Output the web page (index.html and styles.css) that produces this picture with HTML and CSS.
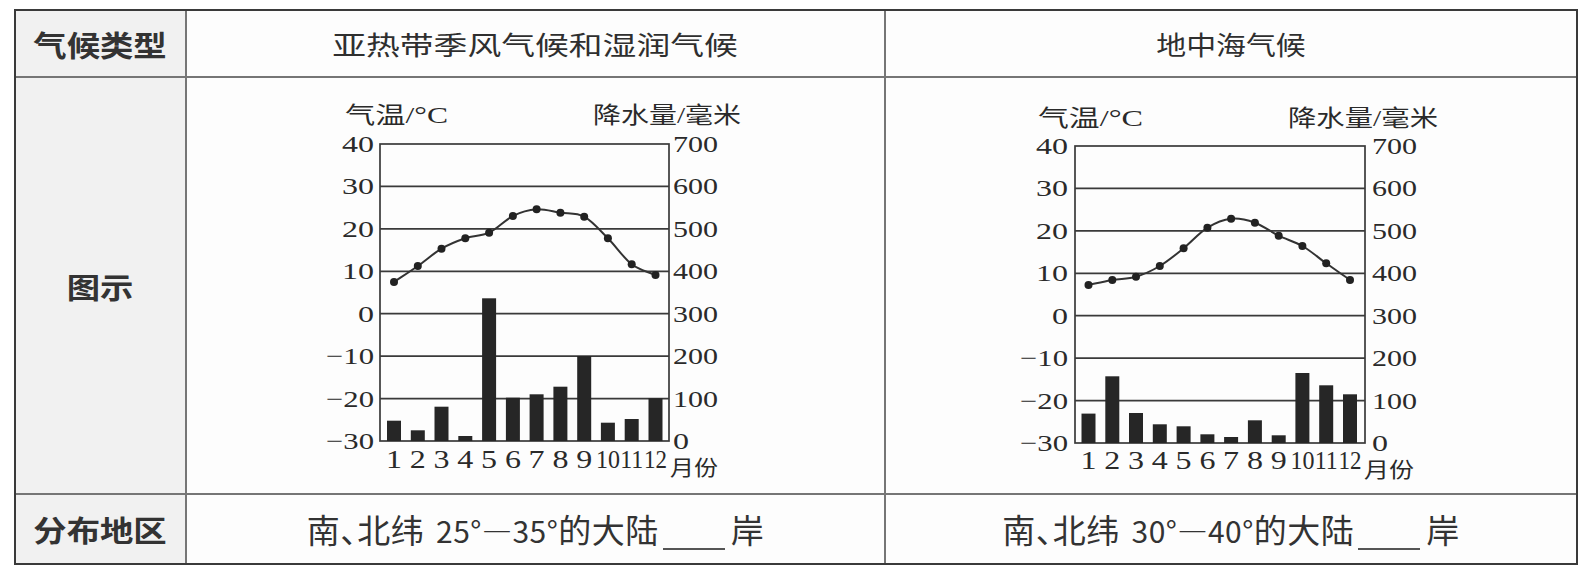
FILE: index.html
```html
<!DOCTYPE html>
<html lang="zh-CN">
<head>
<meta charset="utf-8">
<title>气候类型</title>
<link rel="stylesheet" href="styles.css">
</head>
<body>
<div class="sheet">
  <div class="grid">
    <div class="cell head"><span class="label">气候类型</span></div>
    <div class="cell"><span class="title">亚热带季风气候和湿润气候</span></div>
    <div class="cell"><span class="title narrow">地中海气候</span></div>

    <div class="cell head"><span class="label">图示</span></div>
    <div class="cell chart">
      <svg class="plot" viewBox="0 0 697 415" width="697" height="415">
        <g class="axes">
          <rect x="193" y="66" width="289" height="297"/>
          <line x1="193" y1="108.4" x2="482" y2="108.4"/>
          <line x1="193" y1="150.9" x2="482" y2="150.9"/>
          <line x1="193" y1="193.3" x2="482" y2="193.3"/>
          <line x1="193" y1="235.7" x2="482" y2="235.7"/>
          <line x1="193" y1="278.1" x2="482" y2="278.1"/>
          <line x1="193" y1="320.6" x2="482" y2="320.6"/>
        </g>
        <g class="bars">
          <rect x="200" y="342.7" width="14" height="20.3"/>
          <rect x="223.8" y="352.3" width="14" height="10.7"/>
          <rect x="247.5" y="328.7" width="14" height="34.3"/>
          <rect x="271.3" y="358" width="14" height="5"/>
          <rect x="295.1" y="220.3" width="14" height="142.7"/>
          <rect x="318.9" y="319.7" width="14" height="43.3"/>
          <rect x="342.6" y="316.3" width="14" height="46.7"/>
          <rect x="366.4" y="308.7" width="14" height="54.3"/>
          <rect x="390.2" y="278" width="14" height="85"/>
          <rect x="413.9" y="344.7" width="14" height="18.3"/>
          <rect x="437.7" y="341" width="14" height="22"/>
          <rect x="461.5" y="320.3" width="14" height="42.7"/>
        </g>
        <path class="curve" d="M207,204 C214.9,198.7 222.9,193.6 230.8,188 C238.7,182.5 246.6,175.3 254.5,170.7 C262.4,166.1 270.4,163 278.3,160.3 C286.2,157.6 294.2,158.4 302.1,154.7 C310,151 318,141.9 325.9,138 C333.8,134.1 341.7,131.9 349.6,131.3 C357.5,130.8 365.5,133.5 373.4,134.7 C381.3,135.9 389.3,134.4 397.2,138.7 C405.1,143 413,152.4 420.9,160.3 C428.8,168.2 436.8,180.2 444.7,186.3 C452.6,192.4 460.6,193.4 468.5,197"/>
        <g class="dots">
          <circle cx="207" cy="204" r="4"/>
          <circle cx="230.8" cy="188" r="4"/>
          <circle cx="254.5" cy="170.7" r="4"/>
          <circle cx="278.3" cy="160.3" r="4"/>
          <circle cx="302.1" cy="154.7" r="4"/>
          <circle cx="325.9" cy="138" r="4"/>
          <circle cx="349.6" cy="131.3" r="4"/>
          <circle cx="373.4" cy="134.7" r="4"/>
          <circle cx="397.2" cy="138.7" r="4"/>
          <circle cx="420.9" cy="160.3" r="4"/>
          <circle cx="444.7" cy="186.3" r="4"/>
          <circle cx="468.5" cy="197" r="4"/>
        </g>
        <text x="158" y="45" textLength="103" lengthAdjust="spacingAndGlyphs"><tspan class="cjk">气温</tspan>/°C</text>
        <text x="406" y="45" textLength="148" lengthAdjust="spacingAndGlyphs"><tspan class="cjk">降水量</tspan>/<tspan class="cjk">毫米</tspan></text>
        <g class="end">
          <text x="187" y="74" textLength="32" lengthAdjust="spacingAndGlyphs">40</text>
          <text x="187" y="116.4" textLength="32" lengthAdjust="spacingAndGlyphs">30</text>
          <text x="187" y="158.9" textLength="32" lengthAdjust="spacingAndGlyphs">20</text>
          <text x="187" y="201.3" textLength="32" lengthAdjust="spacingAndGlyphs">10</text>
          <text x="187" y="243.7" textLength="16" lengthAdjust="spacingAndGlyphs">0</text>
          <text x="187" y="286.1" textLength="48" lengthAdjust="spacingAndGlyphs">−10</text>
          <text x="187" y="328.6" textLength="48" lengthAdjust="spacingAndGlyphs">−20</text>
          <text x="187" y="371" textLength="48" lengthAdjust="spacingAndGlyphs">−30</text>
        </g>
        <g>
          <text x="486" y="74" textLength="45" lengthAdjust="spacingAndGlyphs">700</text>
          <text x="486" y="116.4" textLength="45" lengthAdjust="spacingAndGlyphs">600</text>
          <text x="486" y="158.9" textLength="45" lengthAdjust="spacingAndGlyphs">500</text>
          <text x="486" y="201.3" textLength="45" lengthAdjust="spacingAndGlyphs">400</text>
          <text x="486" y="243.7" textLength="45" lengthAdjust="spacingAndGlyphs">300</text>
          <text x="486" y="286.1" textLength="45" lengthAdjust="spacingAndGlyphs">200</text>
          <text x="486" y="328.6" textLength="45" lengthAdjust="spacingAndGlyphs">100</text>
          <text x="486" y="371" textLength="16" lengthAdjust="spacingAndGlyphs">0</text>
        </g>
        <g class="mid">
          <text x="207" y="390" textLength="16" lengthAdjust="spacingAndGlyphs">1</text>
          <text x="230.8" y="390" textLength="16" lengthAdjust="spacingAndGlyphs">2</text>
          <text x="254.5" y="390" textLength="16" lengthAdjust="spacingAndGlyphs">3</text>
          <text x="278.3" y="390" textLength="16" lengthAdjust="spacingAndGlyphs">4</text>
          <text x="302.1" y="390" textLength="16" lengthAdjust="spacingAndGlyphs">5</text>
          <text x="325.9" y="390" textLength="16" lengthAdjust="spacingAndGlyphs">6</text>
          <text x="349.6" y="390" textLength="16" lengthAdjust="spacingAndGlyphs">7</text>
          <text x="373.4" y="390" textLength="16" lengthAdjust="spacingAndGlyphs">8</text>
          <text x="397.2" y="390" textLength="16" lengthAdjust="spacingAndGlyphs">9</text>
          <text x="420.9" y="390" textLength="24" lengthAdjust="spacingAndGlyphs">10</text>
          <text x="444.7" y="390" textLength="23" lengthAdjust="spacingAndGlyphs">11</text>
          <text x="468.5" y="390" textLength="23" lengthAdjust="spacingAndGlyphs">12</text>
        </g>
        <text class="cjk month" x="483" y="397" textLength="48" lengthAdjust="spacingAndGlyphs">月份</text>
      </svg>
    </div>
    <div class="cell chart">
      <svg class="plot" viewBox="0 0 690 415" width="690" height="415">
        <g class="axes">
          <rect x="189" y="68" width="290" height="297"/>
          <line x1="189" y1="110.4" x2="479" y2="110.4"/>
          <line x1="189" y1="152.9" x2="479" y2="152.9"/>
          <line x1="189" y1="195.3" x2="479" y2="195.3"/>
          <line x1="189" y1="237.7" x2="479" y2="237.7"/>
          <line x1="189" y1="280.1" x2="479" y2="280.1"/>
          <line x1="189" y1="322.6" x2="479" y2="322.6"/>
        </g>
        <g class="bars">
          <rect x="195.5" y="335.6" width="14" height="29.4"/>
          <rect x="219.3" y="298.3" width="14" height="66.7"/>
          <rect x="243" y="335" width="14" height="30"/>
          <rect x="266.8" y="346.3" width="14" height="18.7"/>
          <rect x="290.6" y="348.3" width="14" height="16.7"/>
          <rect x="314.4" y="356.3" width="14" height="8.7"/>
          <rect x="338.1" y="359" width="14" height="6"/>
          <rect x="361.9" y="342.3" width="14" height="22.7"/>
          <rect x="385.7" y="357.3" width="14" height="7.7"/>
          <rect x="409.4" y="295" width="14" height="70"/>
          <rect x="433.2" y="307.3" width="14" height="57.7"/>
          <rect x="457" y="316.3" width="14" height="48.7"/>
        </g>
        <path class="curve" d="M202.5,207 C210.4,205.3 218.4,203.4 226.3,202 C234.2,200.6 242.1,201 250,198.7 C257.9,196.4 265.9,192.7 273.8,188 C281.7,183.3 289.7,176.7 297.6,170.3 C305.5,163.9 313.5,154.6 321.4,149.7 C329.3,144.8 337.2,141.5 345.1,140.7 C353,139.9 361,141.9 368.9,144.7 C376.8,147.5 384.8,153.8 392.7,157.7 C400.6,161.6 408.5,163.4 416.4,168 C424.3,172.6 432.3,179.6 440.2,185.3 C448.1,191 456.1,196.4 464,202"/>
        <g class="dots">
          <circle cx="202.5" cy="207" r="4"/>
          <circle cx="226.3" cy="202" r="4"/>
          <circle cx="250" cy="198.7" r="4"/>
          <circle cx="273.8" cy="188" r="4"/>
          <circle cx="297.6" cy="170.3" r="4"/>
          <circle cx="321.4" cy="149.7" r="4"/>
          <circle cx="345.1" cy="140.7" r="4"/>
          <circle cx="368.9" cy="144.7" r="4"/>
          <circle cx="392.7" cy="157.7" r="4"/>
          <circle cx="416.4" cy="168" r="4"/>
          <circle cx="440.2" cy="185.3" r="4"/>
          <circle cx="464" cy="202" r="4"/>
        </g>
        <text x="152" y="48" textLength="105" lengthAdjust="spacingAndGlyphs"><tspan class="cjk">气温</tspan>/°C</text>
        <text x="402" y="48" textLength="150" lengthAdjust="spacingAndGlyphs"><tspan class="cjk">降水量</tspan>/<tspan class="cjk">毫米</tspan></text>
        <g class="end">
          <text x="182" y="76" textLength="32" lengthAdjust="spacingAndGlyphs">40</text>
          <text x="182" y="118.4" textLength="32" lengthAdjust="spacingAndGlyphs">30</text>
          <text x="182" y="160.9" textLength="32" lengthAdjust="spacingAndGlyphs">20</text>
          <text x="182" y="203.3" textLength="32" lengthAdjust="spacingAndGlyphs">10</text>
          <text x="182" y="245.7" textLength="16" lengthAdjust="spacingAndGlyphs">0</text>
          <text x="182" y="288.1" textLength="48" lengthAdjust="spacingAndGlyphs">−10</text>
          <text x="182" y="330.6" textLength="48" lengthAdjust="spacingAndGlyphs">−20</text>
          <text x="182" y="373" textLength="48" lengthAdjust="spacingAndGlyphs">−30</text>
        </g>
        <g>
          <text x="486" y="76" textLength="45" lengthAdjust="spacingAndGlyphs">700</text>
          <text x="486" y="118.4" textLength="45" lengthAdjust="spacingAndGlyphs">600</text>
          <text x="486" y="160.9" textLength="45" lengthAdjust="spacingAndGlyphs">500</text>
          <text x="486" y="203.3" textLength="45" lengthAdjust="spacingAndGlyphs">400</text>
          <text x="486" y="245.7" textLength="45" lengthAdjust="spacingAndGlyphs">300</text>
          <text x="486" y="288.1" textLength="45" lengthAdjust="spacingAndGlyphs">200</text>
          <text x="486" y="330.6" textLength="45" lengthAdjust="spacingAndGlyphs">100</text>
          <text x="486" y="373" textLength="16" lengthAdjust="spacingAndGlyphs">0</text>
        </g>
        <g class="mid">
          <text x="202.5" y="391" textLength="16" lengthAdjust="spacingAndGlyphs">1</text>
          <text x="226.3" y="391" textLength="16" lengthAdjust="spacingAndGlyphs">2</text>
          <text x="250" y="391" textLength="16" lengthAdjust="spacingAndGlyphs">3</text>
          <text x="273.8" y="391" textLength="16" lengthAdjust="spacingAndGlyphs">4</text>
          <text x="297.6" y="391" textLength="16" lengthAdjust="spacingAndGlyphs">5</text>
          <text x="321.4" y="391" textLength="16" lengthAdjust="spacingAndGlyphs">6</text>
          <text x="345.1" y="391" textLength="16" lengthAdjust="spacingAndGlyphs">7</text>
          <text x="368.9" y="391" textLength="16" lengthAdjust="spacingAndGlyphs">8</text>
          <text x="392.7" y="391" textLength="16" lengthAdjust="spacingAndGlyphs">9</text>
          <text x="416.4" y="391" textLength="24" lengthAdjust="spacingAndGlyphs">10</text>
          <text x="440.2" y="391" textLength="23" lengthAdjust="spacingAndGlyphs">11</text>
          <text x="464" y="391" textLength="23" lengthAdjust="spacingAndGlyphs">12</text>
        </g>
        <text class="cjk month" x="478" y="399" textLength="50" lengthAdjust="spacingAndGlyphs">月份</text>
      </svg>
    </div>

    <div class="cell head"><span class="label">分布地区</span></div>
    <div class="cell"><p class="where">南<span class="dun">、</span>北纬 <span class="num">25°—35°</span>的大陆<span class="blank"></span>岸</p></div>
    <div class="cell"><p class="where">南<span class="dun">、</span>北纬 <span class="num">30°—40°</span>的大陆<span class="blank"></span>岸</p></div>
  </div>
</div>
</body>
</html>
```

FILE: styles.css
```css
html, body {
  margin: 0;
  padding: 0;
  background: #ffffff;
}

.sheet {
  padding: 9px 0 0 14px;
}

.grid {
  display: grid;
  grid-template-columns: 169px 697px 690px;
  grid-template-rows: 65px 415px 68px;
  gap: 2px;
  width: max-content;
  background: #767676;
  border: 2px solid #3a3a3a;
}

.cell {
  background: #fdfdfd;
  display: flex;
  align-items: center;
  justify-content: center;
  overflow: hidden;
}

.head {
  background: #f1f1f1;
}

.label {
  display: inline-block;
  font-family: "Noto Sans CJK SC", sans-serif;
  font-weight: 700;
  font-size: 29px;
  color: #333333;
  transform: scaleX(1.15);
}

.title {
  display: inline-block;
  font-family: "Noto Sans CJK SC", sans-serif;
  font-weight: 400;
  font-size: 26px;
  color: #2f2f2f;
  transform: scaleX(1.3);
}

.title.narrow {
  transform: scaleX(1.15);
}

.chart {
  align-items: stretch;
  justify-content: stretch;
}

.plot {
  display: block;
}

.axes rect,
.axes line {
  fill: none;
  stroke: #3a3a3a;
  stroke-width: 1.7;
}

.bars rect {
  fill: #262626;
}

.curve {
  fill: none;
  stroke: #333333;
  stroke-width: 2;
}

.dots circle {
  fill: #222222;
}

.plot text {
  font-family: "Liberation Serif", "Noto Sans CJK SC", serif;
  font-size: 24px;
  fill: #2a2a2a;
}

.plot .cjk {
  font-family: "Noto Sans CJK SC", sans-serif;
  font-size: 23px;
}

.plot .month {
  font-size: 21px;
}

.end text {
  text-anchor: end;
}

.mid text {
  text-anchor: middle;
  font-size: 25px;
}

.where {
  margin: 0;
  font-family: "Noto Sans CJK SC", sans-serif;
  font-weight: 400;
  font-size: 33px;
  letter-spacing: 0.5px;
  color: #333333;
  white-space: nowrap;
}

.dun {
  font-feature-settings: "halt" 1;
}

.num {
  font-size: 30px;
  margin-left: 4px;
}

.blank {
  display: inline-block;
  width: 62px;
  height: 0;
  margin: 0 6px 0 4px;
  border-bottom: 2px solid #555555;
  vertical-align: -7px;
}
```
